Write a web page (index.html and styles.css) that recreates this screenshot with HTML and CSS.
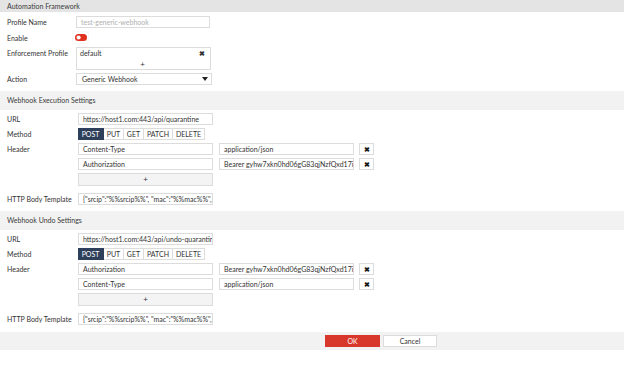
FILE: index.html
```html
<!DOCTYPE html>
<html lang="en">
<head>
    <meta charset="UTF-8">
    <title>Automation Framework</title>
    <link rel="stylesheet" href="styles.css">
</head>
<body>
    <div class="dialog">
        <section class="section">
            <div class="section-title section-title--main">Automation Framework</div>
            <div class="fields fields--first">
                <div class="row">
                    <label class="label">Profile Name</label>
                    <div class="input input--muted input--w134">test-generic-webhook</div>
                </div>
                <div class="row row--toggle">
                    <label class="label">Enable</label>
                    <span class="toggle">
                        <svg width="12" height="7" viewBox="0 0 12 7">
                            <rect x="0" y="0" width="12" height="7" rx="3.5" fill="#e0301e"/>
                            <circle cx="3.6" cy="3.5" r="2.1" fill="#fff"/>
                        </svg>
                    </span>
                </div>
                <div class="row row--tall">
                    <label class="label">Enforcement Profile</label>
                    <div class="multi">
                        <div class="multi-entry">
                            <span>default</span>
                            <span class="multi-remove">&#10006;</span>
                        </div>
                        <div class="multi-add">+</div>
                    </div>
                </div>
                <div class="row">
                    <label class="label">Action</label>
                    <div class="select">
                        <span>Generic Webhook</span>
                        <svg class="caret" width="6" height="4" viewBox="0 0 6 4"><path d="M0 0h6L3 4z" fill="#222"/></svg>
                    </div>
                </div>
            </div>
        </section>

        <section class="section">
            <div class="section-title">Webhook Execution Settings</div>
            <div class="fields">
                <div class="row">
                    <label class="label">URL</label>
                    <div class="input">https://host1.com:443/api/quarantine</div>
                </div>
                <div class="row">
                    <label class="label">Method</label>
                    <div class="segmented">
                        <span class="seg seg--post seg--active">POST</span>
                        <span class="seg seg--put">PUT</span>
                        <span class="seg seg--get">GET</span>
                        <span class="seg seg--patch">PATCH</span>
                        <span class="seg seg--delete">DELETE</span>
                    </div>
                </div>
                <div class="row">
                    <label class="label">Header</label>
                    <div class="input">Content-Type</div>
                    <div class="input input--value">application/json</div>
                    <span class="remove">&#10006;</span>
                </div>
                <div class="row">
                    <label class="label"></label>
                    <div class="input">Authorization</div>
                    <div class="input input--value">Bearer gyhw7xkn0hd06gG83qjNzfQxd17i</div>
                    <span class="remove">&#10006;</span>
                </div>
                <div class="row">
                    <label class="label"></label>
                    <div class="add-btn">+</div>
                </div>
                <div class="row row--body">
                    <label class="label">HTTP Body Template</label>
                    <div class="input">{"srcip":"%%srcip%%", "mac":"%%mac%%",</div>
                </div>
            </div>
        </section>

        <section class="section">
            <div class="section-title">Webhook Undo Settings</div>
            <div class="fields fields--last">
                <div class="row">
                    <label class="label">URL</label>
                    <div class="input">https://host1.com:443/api/undo-quarantine</div>
                </div>
                <div class="row">
                    <label class="label">Method</label>
                    <div class="segmented">
                        <span class="seg seg--post seg--active">POST</span>
                        <span class="seg seg--put">PUT</span>
                        <span class="seg seg--get">GET</span>
                        <span class="seg seg--patch">PATCH</span>
                        <span class="seg seg--delete">DELETE</span>
                    </div>
                </div>
                <div class="row">
                    <label class="label">Header</label>
                    <div class="input">Authorization</div>
                    <div class="input input--value">Bearer gyhw7xkn0hd06gG83qjNzfQxd17i</div>
                    <span class="remove">&#10006;</span>
                </div>
                <div class="row">
                    <label class="label"></label>
                    <div class="input">Content-Type</div>
                    <div class="input input--value">application/json</div>
                    <span class="remove">&#10006;</span>
                </div>
                <div class="row">
                    <label class="label"></label>
                    <div class="add-btn">+</div>
                </div>
                <div class="row row--body">
                    <label class="label">HTTP Body Template</label>
                    <div class="input">{"srcip":"%%srcip%%", "mac":"%%mac%%",</div>
                </div>
            </div>
        </section>

        <footer class="footer">
            <button class="btn btn--ok">OK</button>
            <button class="btn btn--cancel">Cancel</button>
        </footer>
    </div>
</body>
</html>
```

FILE: styles.css
```css
* {
    margin: 0;
    padding: 0;
    box-sizing: border-box;
}

body {
    background: #ffffff;
    font-family: 'Lato', 'Liberation Sans', sans-serif;
    font-size: 7px;
    color: #333;
}

.dialog {
    width: 624px;
}

.section-title {
    height: 19px;
    line-height: 19px;
    padding-left: 7px;
    background: #f2f2f2;
    color: #3a3a3a;
}

.section-title--main {
    height: 12px;
    line-height: 12px;
    background: #e4e4e4;
}

.fields {
    display: flex;
    flex-direction: column;
    gap: 3px;
    padding: 3px 0 6px;
}

.fields--first {
    padding-top: 4px;
}

.fields--last {
    padding-bottom: 7px;
}

.row {
    display: flex;
    align-items: center;
    height: 12px;
}

.row--toggle {
    height: 13px;
}

.row--tall {
    height: 23px;
    align-items: flex-start;
}

.row--tall .label {
    line-height: 12px;
}

.row--body {
    margin-top: 5px;
}

.label {
    width: 78px;
    padding-left: 7px;
    flex-shrink: 0;
    color: #333;
}

.fields--first .label {
    width: 76px;
}

.input {
    width: 135px;
    height: 12px;
    line-height: 10px;
    padding: 0 4px;
    border: 1px solid #dcdcdc;
    background: #fff;
    white-space: nowrap;
    overflow: hidden;
    color: #333;
}

.input--w134 {
    width: 134px;
}

.input--muted {
    color: #b0b0b0;
}

.input--value {
    margin-left: 6px;
}

.remove {
    width: 15px;
    height: 12px;
    margin-left: 5px;
    border: 1px solid #dcdcdc;
    text-align: center;
    line-height: 10px;
    font-size: 7px;
    font-weight: 700;
    color: #1a1a1a;
}

.toggle {
    display: flex;
    align-items: center;
    justify-content: center;
    width: 15px;
    height: 11px;
    margin-left: -3px;
    background: #fff;
    box-shadow: 0 0 1px rgba(0, 0, 0, 0.15);
}

.multi {
    width: 135px;
    height: 23px;
    border: 1px solid #dcdcdc;
    padding: 0 5px 0 3px;
}

.multi-entry {
    display: flex;
    justify-content: space-between;
    line-height: 11px;
}

.multi-remove {
    font-size: 7px;
    font-weight: 700;
    color: #333;
}

.multi-add {
    text-align: center;
    line-height: 10px;
    font-size: 8px;
}

.select {
    display: flex;
    align-items: center;
    justify-content: space-between;
    width: 136px;
    height: 12px;
    padding: 0 3px 0 5px;
    border: 1px solid #dcdcdc;
}

.segmented {
    display: flex;
    height: 12px;
}

.seg {
    height: 12px;
    line-height: 10px;
    text-align: center;
    border: 1px solid #dcdcdc;
    border-left: none;
    color: #333;
}

.seg--post { width: 26px; }
.seg--put { width: 20px; }
.seg--get { width: 20px; }
.seg--patch { width: 29px; }
.seg--delete { width: 32px; }

.seg--active {
    background: #2e3f5c;
    border-color: #2e3f5c;
    color: #fff;
}

.add-btn {
    width: 135px;
    height: 13px;
    line-height: 11px;
    text-align: center;
    font-size: 8px;
    border: 1px solid #dcdcdc;
    background: #f4f4f4;
}

.footer {
    display: flex;
    align-items: center;
    gap: 3px;
    height: 18px;
    padding-left: 325px;
    background: #f2f2f2;
}

.btn {
    width: 55px;
    height: 12px;
    font-family: inherit;
    font-size: 7px;
    border: 1px solid #dcdcdc;
}

.btn--ok {
    background: #d8382b;
    border-color: #d8382b;
    color: #fff;
}

.btn--cancel {
    width: 54px;
    background: #fff;
    color: #333;
}
```
